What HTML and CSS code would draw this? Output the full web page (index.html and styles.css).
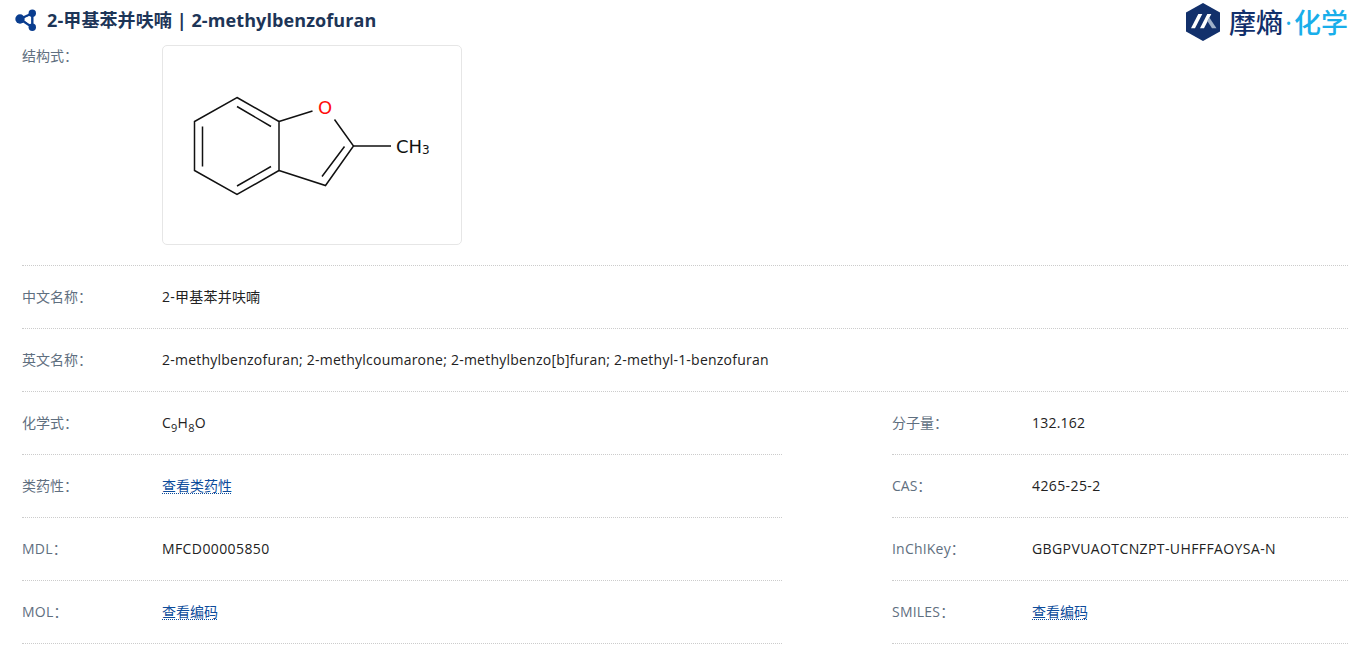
FILE: index.html
```html
<!DOCTYPE html>
<html lang="zh-CN">
<head>
    <meta charset="UTF-8">
    <title>2-甲基苯并呋喃 | 2-methylbenzofuran</title>
    <link rel="stylesheet" href="styles.css">
</head>
<body>

    <!-- Title bar -->
    <div class="top-bar">
        <h1 class="page-title">
            <svg class="title-icon" width="24" height="24" viewBox="0 0 24 24">
                <path d="M7 12 L19.3 6.3 V20.3 Z" stroke="#0a3d8f" stroke-width="2.4" fill="none"/>
                <path d="M10 12 L16.5 9 V17 Z" fill="#ffffff"/>
                <circle cx="7" cy="12" r="4.7" fill="#0a3d8f"/>
                <circle cx="19.3" cy="6.3" r="3.7" fill="#0a3d8f"/>
                <circle cx="19.3" cy="20.3" r="3.7" fill="#0a3d8f"/>
            </svg>
            2-甲基苯并呋喃 | 2-methylbenzofuran
        </h1>
        <div class="brand">
            <svg width="34" height="38" viewBox="0 0 34 38">
                <path d="M17 0 L34 9.5 V28.5 L17 38 L0 28.5 V9.5 Z" fill="#12306b"/>
                <path d="M5 25.3 L12.3 11 H16.3 L9 25.3 Z" fill="#ffffff"/>
                <path d="M14 25.3 L21.3 11 H25.3 L18 25.3 Z" fill="#ffffff"/>
                <path d="M23.3 14.5 L30.5 25.3 H26 L21.3 18 Z" fill="#9fb0c8"/>
            </svg>
            <span class="brand-name"><span class="brand-dark">摩熵</span><span class="brand-light"><span class="brand-dot">·</span>化学</span></span>
        </div>
    </div>

    <div class="info-list">
        <!-- Structure -->
        <div class="row row-structure">
            <div class="label">结构式：</div>
            <div class="structure-box">
                <svg width="298" height="198" viewBox="0 0 298 198">
                    <g stroke="#111" stroke-width="1.5" fill="none">
                        <path d="M74 51.5 L116 75.5 V124.5 L74 148.5 L31.5 124.5 V75.5 Z"/>
                        <path d="M74 60.5 L108 80.5 M39.5 80.5 V120.5 M108 120.5 L74 140"/>
                        <path d="M116 75.5 L149.5 65 M171.5 73.5 L190.5 100 L162.5 139.5 L116 124.5"/>
                        <path d="M181.5 100.5 L159 130.5 M190.5 100 H228"/>
                    </g>
                    <text class="atom atom-o" x="162" y="68" text-anchor="middle">O</text>
                    <text class="atom" x="233" y="107">CH<tspan class="atom-sub" dy="1">3</tspan></text>
                </svg>
            </div>
        </div>

        <div class="row">
            <div class="label">中文名称：</div>
            <div class="value">2-甲基苯并呋喃</div>
        </div>
        <div class="row">
            <div class="label">英文名称：</div>
            <div class="value">2-methylbenzofuran; 2-methylcoumarone; 2-methylbenzo[b]furan; 2-methyl-1-benzofuran</div>
        </div>

        <!-- Two column part -->
        <div class="two-col">
            <div class="row">
                <div class="label">化学式：</div>
                <div class="value">C<sub>9</sub>H<sub>8</sub>O</div>
            </div>
            <div class="row">
                <div class="label">分子量：</div>
                <div class="value">132.162</div>
            </div>
            <div class="row">
                <div class="label">类药性：</div>
                <div class="value"><a class="link" href="#">查看类药性</a></div>
            </div>
            <div class="row">
                <div class="label">CAS：</div>
                <div class="value value-code">4265-25-2</div>
            </div>
            <div class="row">
                <div class="label label-latin">MDL：</div>
                <div class="value value-code">MFCD00005850</div>
            </div>
            <div class="row">
                <div class="label label-latin">InChIKey：</div>
                <div class="value value-code">GBGPVUAOTCNZPT-UHFFFAOYSA-N</div>
            </div>
            <div class="row">
                <div class="label label-latin">MOL：</div>
                <div class="value"><a class="link" href="#">查看编码</a></div>
            </div>
            <div class="row">
                <div class="label label-latin">SMILES：</div>
                <div class="value"><a class="link" href="#">查看编码</a></div>
            </div>
        </div>
    </div>

</body>
</html>
```

FILE: styles.css
```css
body {
    font-family: "Open Sans", "Noto Sans CJK SC", sans-serif;
    font-size: 14px;
    margin: 0;
    background-color: #ffffff;
    color: #222222;
}
.top-bar {
    display: flex;
    justify-content: space-between;
    height: 45px;
    padding: 0 1px 0 13px;
}
.page-title {
    display: flex;
    align-items: center;
    gap: 10px;
    height: 38px;
    margin: 0;
    font-size: 18px;
    font-weight: 700;
    letter-spacing: 0.1px;
    color: #1d3557;
}
.title-icon {
    flex: none;
}
.brand {
    display: flex;
    align-items: center;
    gap: 9px;
    height: 44px;
}
.brand-name {
    font-family: "Noto Sans CJK SC", sans-serif;
    font-size: 27px;
    font-weight: 500;
    line-height: 1;
    white-space: nowrap;
}
.brand-dark {
    color: #12306b;
}
.brand-light {
    color: #19aeea;
}
.brand-dot {
    display: inline-block;
    width: 11px;
    text-align: center;
    font-family: "Open Sans", sans-serif;
}
.info-list {
    padding: 0 1px 0 22px;
}
.row {
    display: flex;
    align-items: center;
    height: 60px;
    padding-bottom: 2px;
    border-bottom: 1px dotted #cccccc;
}
.row-structure {
    align-items: flex-start;
    height: auto;
    padding-bottom: 20px;
}
.label {
    flex: none;
    width: 140px;
    color: #5f6f80;
}
.label-latin {
    letter-spacing: 0.2px;
}
.row-structure .label {
    line-height: 22px;
}
.value {
    color: #222222;
    letter-spacing: 0.23px;
}
.value-code {
    letter-spacing: 0.4px;
}
.value sub {
    font-size: 11px;
    line-height: 0;
}
.link {
    color: #0d4c9b;
    letter-spacing: 0;
    text-decoration: underline dotted 1px;
    text-underline-offset: 2px;
}
.structure-box {
    width: 298px;
    height: 198px;
    border: 1px solid #e6e6e6;
    border-radius: 5px;
}
.atom {
    font-family: "DejaVu Sans", sans-serif;
    font-size: 18px;
    fill: #111111;
}
.atom-o {
    fill: #ff0d0d;
}
.atom-sub {
    font-size: 12px;
}
.two-col {
    display: grid;
    grid-template-columns: 760px 456px;
    column-gap: 110px;
}
```
